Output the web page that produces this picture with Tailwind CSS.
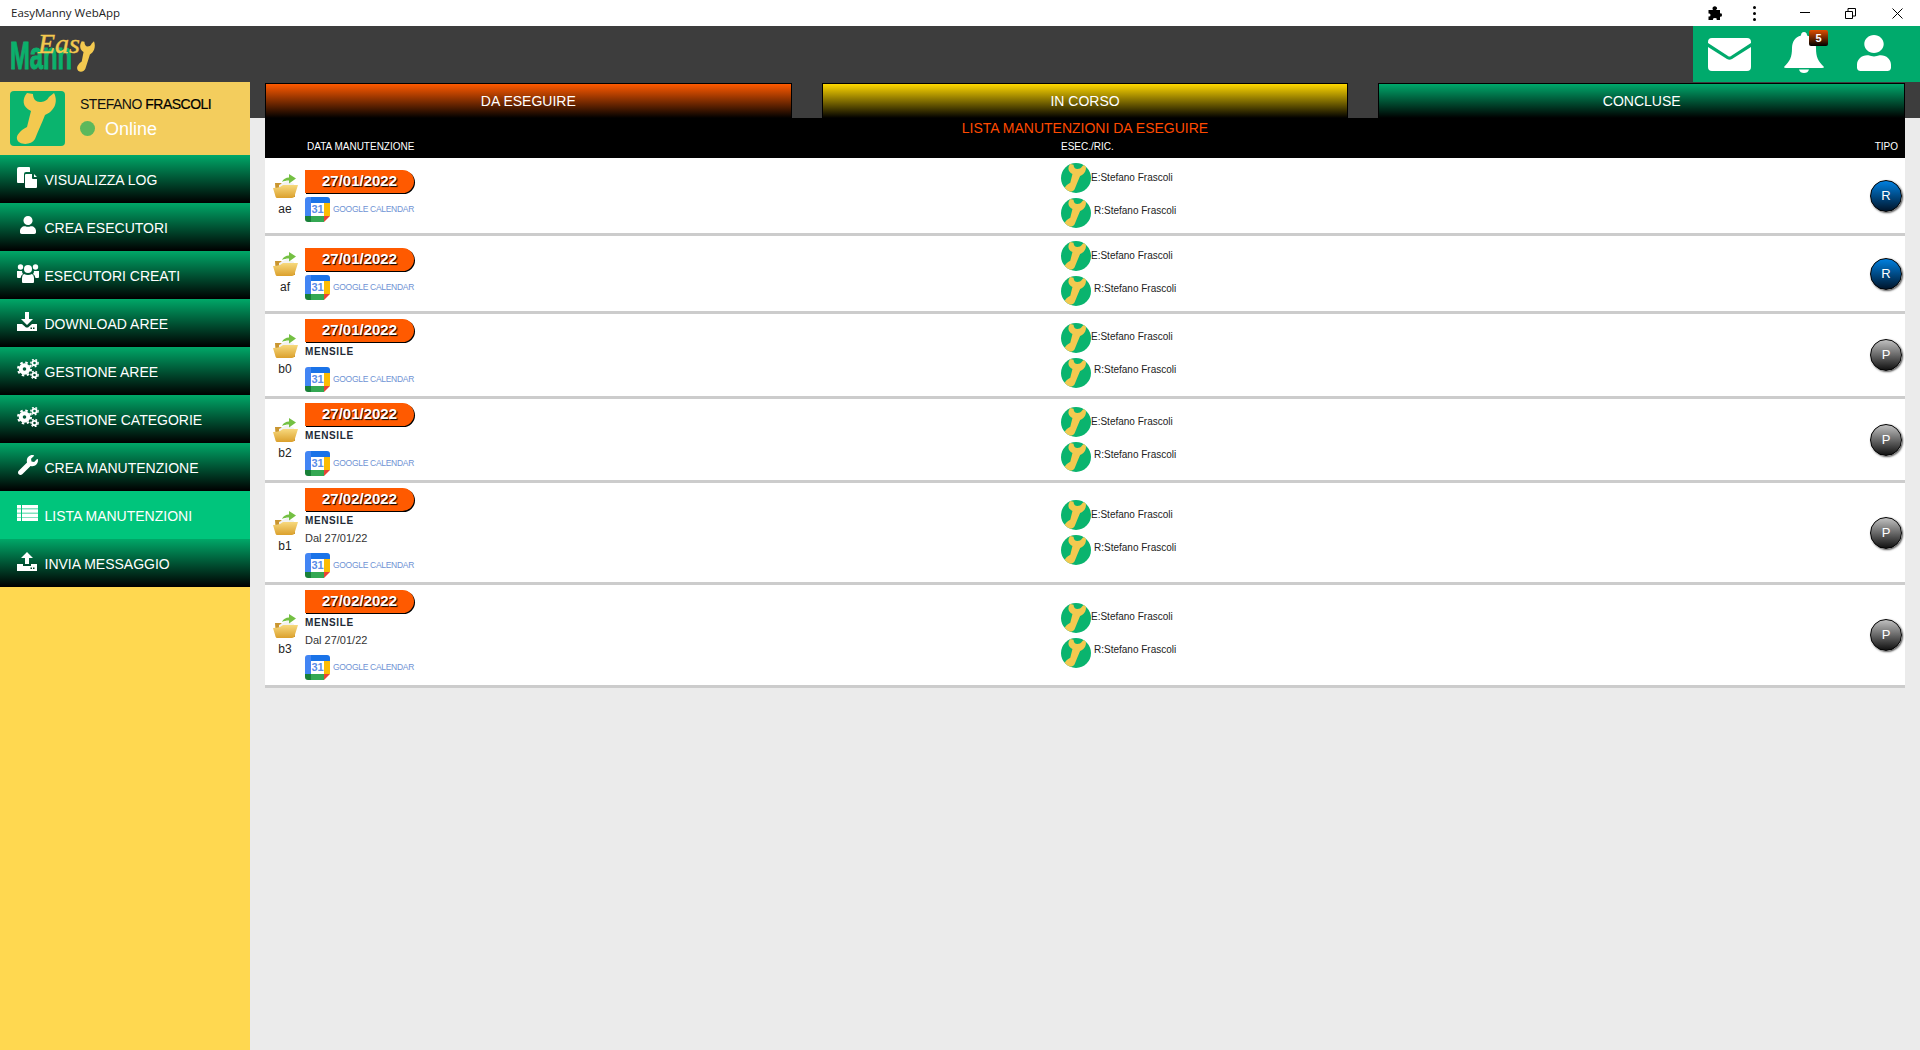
<!DOCTYPE html>
<html lang="en">
  <head>
    <meta charset="UTF-8" />
    <meta name="viewport" content="width=device-width, initial-scale=1.0" />
    <script src="https://cdn.jsdelivr.net/npm/@tailwindcss/browser@4"></script>
    <title>EasyManny WebApp</title>
  </head>
  <body class="h-screen overflow-hidden bg-[#ebebeb] font-['Liberation_Sans',Arial,sans-serif]">
    <svg class="absolute h-0 w-0">
      <defs>
        <linearGradient id="folder-front" x1="0" y1="0" x2="0" y2="1">
          <stop offset="0" stop-color="#f7d97e" />
          <stop offset="1" stop-color="#dba02c" />
        </linearGradient>
      </defs>
      <symbol id="wrench-big" viewBox="0 0 55 55">
        <path fill="#f3c94f" d="M17 2C12 8 12 16 21 20L17 36C11 39 6 44 7 48C8 54 21 55 25 48C28 40 32 32 35 24C43 21 49 12 44 2L39 6C37 10 33 11 30 11C26 11 23 8 23 3Z" />
      </symbol>
      <symbol id="cogs" viewBox="0 0 22 20">
        <g fill="none" stroke="#fff">
          <circle cx="7.500" cy="10" r="3.800" stroke-width="4" />
          <circle cx="7.500" cy="10" r="6.500" stroke-width="2" stroke-dasharray="2.500 2.600" />
          <circle cx="17.500" cy="4" r="2.200" stroke-width="1.800" />
          <circle cx="17.500" cy="4" r="3.600" stroke-width="1.400" stroke-dasharray="1.800 1.700" />
          <circle cx="17.500" cy="16" r="2.200" stroke-width="1.800" />
          <circle cx="17.500" cy="16" r="3.600" stroke-width="1.400" stroke-dasharray="1.800 1.700" />
        </g>
      </symbol>
      <symbol id="user" viewBox="0 0 448 512">
        <path fill="#fff" d="M224 256c70.700 0 128-57.300 128-128S294.700 0 224 0 96 57.300 96 128s57.300 128 128 128zm89.600 32h-16.700c-22.200 10.200-46.900 16-72.900 16s-50.600-5.800-72.900-16h-16.700C60.200 288 0 348.200 0 422.400V464c0 26.500 21.500 48 48 48h352c26.500 0 48-21.500 48-48v-41.600c0-74.200-60.200-134.400-134.400-134.400z" />
      </symbol>
      <symbol id="folder" viewBox="0 0 25 26">
        <path fill="#c9952f" d="M2 10H8L10 12H22V24H3Z" />
        <path fill="#f2f2f2" d="M6 12L14 8L21 11V17H6Z" />
        <path fill="#74c043" d="M9 9C10 6 13 4.500 16 4.500V1L23 5.500L16 10.500V7.500C13 7.500 11 8 9 9Z" />
        <path fill="url(#folder-front)" d="M0 15Q4 15 7 14L10 12H25L21.500 23Q21 25 19 25H4Q3 25 2.700 24Z" />
      </symbol>
    </svg>

    <!-- barra titolo -->
    <div class="flex h-[26px] items-center bg-white text-[#222]">
      <span class="pl-[11px] font-['Open_Sans',sans-serif] text-[11.5px]">EasyManny WebApp</span>
      <div class="ml-auto flex items-center">
        <svg class="mr-[31px] h-[15px] w-[15px]" viewBox="0 0 15 15">
          <path d="M6 1Q8-.5 9.500 1T9 4H13V7.500Q15 6.500 15 9T13 10.500V14H9.500Q10.500 12 8 12T6 14H1.500V10.500Q3.500 11 3.500 9T1.500 7.500V4H6Q5 2.500 6 1Z" />
        </svg>
        <div class="mr-[44px] flex flex-col gap-[3px]">
          <i class="block h-[3px] w-[3px] rounded-full bg-black"></i>
          <i class="block h-[3px] w-[3px] rounded-full bg-black"></i>
          <i class="block h-[3px] w-[3px] rounded-full bg-black"></i>
        </div>
        <svg class="mr-[34px] h-[12px] w-[11px]" viewBox="0 0 11 12"><path stroke="#000" d="M0 5.500H10" /></svg>
        <svg class="mr-[36px] h-[11px] w-[11px]" viewBox="0 0 11 11" fill="none" stroke="#000"><path d="M.5 3.500H7.500V10.500H.5ZM3 3V.5H10.500V8H8" /></svg>
        <svg class="mr-[17px] h-[11px] w-[11px]" viewBox="0 0 11 11" stroke="#000"><path d="M.5 .5L10.500 10.500M10.500 .5L.5 10.500" /></svg>
      </div>
    </div>

    <!-- header -->
    <header class="flex h-[56px] items-stretch justify-between bg-[#3d3d3d]">
      <div class="relative ml-[10px] h-[56px] w-[90px] overflow-hidden">
        <span class="absolute left-0 top-[10px] origin-left scale-x-[0.61] text-[39px] font-bold leading-[39px] text-[#0bb06c] [-webkit-text-stroke:1px_#0bb06c]">Mann</span>
        <span class="absolute left-[28px] top-[3px] font-['Liberation_Serif',serif] text-[28px] italic leading-[30px] text-[#f3c94f] [-webkit-text-stroke:0.4px_#f3c94f]">Eas</span>
        <svg class="absolute left-[64px] top-[14px] h-[33px] w-[25px]" viewBox="0 0 55 55" preserveAspectRatio="none"><use href="#wrench-big" /></svg>
      </div>
      <div class="relative flex w-[227px] bg-[#00aa6c]">
        <svg class="absolute left-[15px] top-[12px] h-[33px] w-[43px]" viewBox="0 0 43 33">
          <path fill="#fff" d="M4 0H39Q43 0 43 4V5L23 18Q21.500 19 20 18L0 5V4Q0 0 4 0ZM0 9L19 21Q21.500 22.500 24 21L43 9V29Q43 33 39 33H4Q0 33 0 29Z" />
        </svg>
        <svg class="absolute left-[91px] top-[6px] h-[41px] w-[40px]" viewBox="0 0 40 41">
          <path fill="#fff" d="M20 0Q23 0 23 3.500C29 5 32 10 32 16C32 25 34 29 40 35Q40 36 38 36H2Q0 36 0 35C6 29 8 25 8 16C8 10 11 5 17 3.500Q17 0 20 0ZM15 37.500H25Q24 41 20 41T15 37.500Z" />
        </svg>
        <span class="absolute left-[116px] top-[4px] flex h-[16px] w-[19px] items-center justify-center rounded-[2px] bg-linear-to-b/srgb from-[#e04e00] to-black text-[11px] font-bold text-white">5</span>
        <svg class="absolute left-[164px] top-[9px] h-[36px] w-[34px]" viewBox="0 0 448 512" preserveAspectRatio="none"><use href="#user" /></svg>
      </div>
    </header>

    <div class="flex h-[968px]">
      <!-- sidebar -->
      <aside class="w-[250px] shrink-0 bg-[#ffd850]">
        <div class="flex h-[73px] items-center gap-[15px] bg-[#f3cd5d] pl-[10px]">
          <div class="h-[55px] w-[55px] rounded-[4px] bg-[#0ab46e]">
            <svg class="h-[55px] w-[55px]"><use href="#wrench-big" /></svg>
          </div>
          <div class="pb-[4px]">
            <div class="text-[14px] leading-[18px] tracking-[-0.5px] text-[#111]">STEFANO <span class="text-black [-webkit-text-stroke:0.2px_black]">FRASCOLI</span></div>
            <div class="mt-[6px] flex items-center gap-[10px]">
              <i class="block h-[15px] w-[15px] rounded-full bg-[#5cb85c]"></i>
              <span class="text-[18px] leading-[20px] text-white">Online</span>
            </div>
          </div>
        </div>
        <nav id="menu"></nav>
      </aside>

      <!-- contenuto -->
      <main class="flex-1 bg-[linear-gradient(#3d3d3d_36px,#ebebeb_36px)] px-[15px] pt-[1px]">
        <div class="grid h-[35px] grid-cols-3 gap-[30px] text-[14px] text-white">
          <div class="flex items-center justify-center border-x border-t border-black bg-linear-to-b/srgb from-[#ff5a00] to-black">DA ESEGUIRE</div>
          <div class="flex items-center justify-center border-x border-t border-black bg-linear-to-b/srgb from-[#ffd800] to-black">IN CORSO</div>
          <div class="flex items-center justify-center border-x border-t border-black bg-linear-to-b/srgb from-[#00a86b] to-black">CONCLUSE</div>
        </div>
        <div class="relative h-[40px] bg-black text-white">
          <div class="pt-[2px] text-center text-[14px] leading-[16px] text-[#ff4a00]">LISTA MANUTENZIONI DA ESEGUIRE</div>
          <span class="absolute left-[42px] top-[23px] text-[10px] leading-[12px]">DATA MANUTENZIONE</span>
          <span class="absolute left-[796px] top-[23px] text-[10px] leading-[12px]">ESEC./RIC.</span>
          <span class="absolute right-[7px] top-[23px] text-[10px] leading-[12px]">TIPO</span>
        </div>
        <div id="rows"></div>
      </main>
    </div>

    <script>
      const menu = [
        {
          label: "VISUALIZZA LOG",
          icon: '<svg class="h-[21px] w-[21px]" viewBox="0 0 21 21"><path fill="#fff" d="M2 0H12Q13 0 13 1V5H9Q7 5 7 7V16H1Q0 16 0 15V2Q0 0 2 0ZM9 7H15V11Q15 12 16 12H20V20Q20 21 19 21H9Q8 21 8 20V8Q8 7 9 7ZM17 7L20 10H17Z"/></svg>',
        },
        {
          label: "CREA ESECUTORI",
          icon: '<svg class="ml-[3px] h-[18px] w-[16px]" viewBox="0 0 448 512" preserveAspectRatio="none"><use href="#user"/></svg>',
        },
        {
          label: "ESECUTORI CREATI",
          icon: '<svg class="h-[20px] w-[22px]" viewBox="0 0 22 20" fill="#fff"><circle cx="3.500" cy="4" r="2.700"/><circle cx="18.500" cy="4" r="2.700"/><circle cx="11" cy="6" r="4"/><path d="M0 8H5Q5 10 6 11Q4 12 3.500 15H1Q0 15 0 14ZM22 8H17Q17 10 16 11Q18 12 18.500 15H21Q22 15 22 14ZM7 11Q11 13 15 11Q17 12 17 15V19Q17 20 16 20H6Q5 20 5 19V15Q5 12 7 11Z"/></svg>',
        },
        {
          label: "DOWNLOAD AREE",
          icon: '<svg class="h-[19px] w-[20px]" viewBox="0 0 20 19" fill="#fff"><path d="M8 0H12V7H16L10 13L4 7H8ZM0 12H5L9 15.500H11L15 12H20V19H0ZM13.500 15.500V17H15V15.500ZM16 15.500V17H17.500V15.500Z" fill-rule="evenodd"/></svg>',
        },
        {
          label: "GESTIONE AREE",
          icon: '<svg class="h-[20px] w-[22px]"><use href="#cogs"/></svg>',
        },
        {
          label: "GESTIONE CATEGORIE",
          icon: '<svg class="h-[20px] w-[22px]"><use href="#cogs"/></svg>',
        },
        {
          label: "CREA MANUTENZIONE",
          icon: '<svg class="ml-[1px] h-[20px] w-[20px]" viewBox="0 0 512 512"><path fill="#fff" d="M507.730 109.100c-2.240-9.030-13.540-12.090-20.120-5.510l-74.360 74.360-67.880-11.310-11.310-67.880 74.360-74.360c6.620-6.620 3.430-17.900-5.660-20.160-47.380-11.740-99.550.91-136.580 37.930-39.640 39.640-50.550 97.100-34.050 147.200L18.740 402.760c-24.990 24.990-24.990 65.510 0 90.500 24.990 24.990 65.510 24.990 90.500 0l213.210-213.210c50.120 16.710 107.470 5.680 147.370-34.220 37.070-37.070 49.700-89.320 37.910-136.730z"/></svg>',
        },
        {
          label: "LISTA MANUTENZIONI",
          active: true,
          icon: '<svg class="h-[16px] w-[21px]" viewBox="0 0 21 16" fill="#fff"><path d="M0 0H4V3.500H0ZM5 0H21V3.500H5ZM0 4.200H4V7.700H0ZM5 4.200H21V7.700H5ZM0 8.400H4V11.900H0ZM5 8.400H21V11.900H5ZM0 12.500H4V16H0ZM5 12.500H21V16H5Z"/></svg>',
        },
        {
          label: "INVIA MESSAGGIO",
          icon: '<svg class="h-[19px] w-[20px]" viewBox="0 0 20 19" fill="#fff"><path d="M10 0L16 6H12V12H8V6H4ZM0 12H6V14H14V12H20V19H0ZM13.500 15.500V17H15V15.500ZM16 15.500V17H17.500V15.500Z" fill-rule="evenodd"/></svg>',
        },
      ];

      document.getElementById("menu").innerHTML = menu
        .map(
          (item) => `
          <a class="flex h-[48px] items-center ${item.active ? "bg-[#00c57c]" : "bg-linear-to-b/srgb from-[#00a868] to-black"} pt-[2px] pl-[17px] text-[14px] text-white">
            <span class="flex w-[27.500px] -translate-y-[3px] items-start">${item.icon}</span>${item.label}
          </a>`
        )
        .join("");

      const rows = [
        { id: "ae", date: "27/01/2022", tipo: "R", h: "h-[75px]" },
        { id: "af", date: "27/01/2022", tipo: "R", h: "h-[75px]" },
        { id: "b0", date: "27/01/2022", tipo: "P", freq: "MENSILE", h: "h-[82px]" },
        { id: "b2", date: "27/01/2022", tipo: "P", freq: "MENSILE", h: "h-[81px]" },
        { id: "b1", date: "27/02/2022", tipo: "P", freq: "MENSILE", dal: "Dal 27/01/22", h: "h-[99px]" },
        { id: "b3", date: "27/02/2022", tipo: "P", freq: "MENSILE", dal: "Dal 27/01/22", h: "h-[100px]" },
      ];

      const calendarIcon = `
        <span class="relative block h-[25px] w-[25px] shrink-0 overflow-hidden rounded-[3px] bg-[#fff]">
          <svg class="absolute inset-0 h-[25px] w-[25px]" viewBox="0 0 25 25">
            <path fill="#4285f4" d="M0 0H6V19H0Z" />
            <path fill="#1a73e8" d="M6 0H25V6H6Z" />
            <path fill="#fbbc04" d="M19 6H25V19H19Z" />
            <path fill="#34a853" d="M6 19H19V25H6Z" />
            <path fill="#188038" d="M0 19H6V25H0Z" />
            <path fill="#ea4335" d="M19 19H25L19 25Z" />
          </svg>
          <span class="absolute inset-x-[6px] top-[6px] text-center text-[11px] font-bold leading-[13px] text-[#5a8de8]">31</span>
        </span>`;

      document.getElementById("rows").innerHTML = rows
        .map(
          (row) => `
          <div class="box-content flex ${row.h} items-center border-b-[3px] border-[#cccccc] bg-white">
            <div class="flex w-[40px] -translate-y-[1px] flex-col items-center text-[12px] text-[#222]">
              <svg class="h-[26px] w-[25px]"><use href="#folder"/></svg>
              <span class="mt-[3px] leading-[14px]">${row.id}</span>
            </div>
            <div class="w-[756px]">
              <div class="flex h-[23px] w-[109px] items-center justify-center rounded-r-[12px] bg-[#ff5a00] text-[15px] font-bold text-white shadow-[1px_1px_0_#000] [text-shadow:1px_1px_1px_#000]">${row.date}</div>
              ${row.freq ? `<div class="mt-[1px] h-[17px] text-[10px] font-bold leading-[17px] tracking-[0.6px] text-[#222a35]">${row.freq}</div>` : ""}
              ${row.dal ? `<div class="mt-[1px] h-[17px] text-[11px] leading-[17px] text-[#333]">${row.dal}</div>` : ""}
              <div class="${row.dal ? "mt-[6px]" : row.freq ? "mt-[7px]" : "mt-[4px]"} flex items-center gap-[3px]">
                ${calendarIcon}
                <span class="text-[8.500px] tracking-[-0.3px] text-[#6f93d4]">GOOGLE CALENDAR</span>
              </div>
            </div>
            <div class="flex-1 text-[10px] text-[#222]">
              <div class="flex h-[30px] items-center">
                <span class="flex h-[30px] w-[30px] items-center justify-center overflow-hidden rounded-full bg-[#0ab46e]"><svg class="h-[30px] w-[30px]"><use href="#wrench-big"/></svg></span>
                <span class="-translate-y-[1px]">E:Stefano Frascoli</span>
              </div>
              <div class="mt-[5px] flex h-[30px] items-center">
                <span class="flex h-[30px] w-[30px] items-center justify-center overflow-hidden rounded-full bg-[#0ab46e]"><svg class="h-[30px] w-[30px]"><use href="#wrench-big"/></svg></span>
                <span class="ml-[3px] -translate-y-[3px]">R:Stefano Frascoli</span>
              </div>
            </div>
            <div class="flex w-[48px] justify-end pr-[3px]">
              <span class="flex h-[32px] w-[32px] items-center justify-center rounded-full border border-black text-[13px] text-white shadow-[1px_1px_2px_#555] ${row.tipo === "R" ? "bg-linear-to-b/srgb from-[#0080e0] to-[#00152b]" : "bg-linear-to-b/srgb from-[#c0c0c0] to-[#111]"}">${row.tipo}</span>
            </div>
          </div>`
        )
        .join("");
    </script>
  </body>
</html>
